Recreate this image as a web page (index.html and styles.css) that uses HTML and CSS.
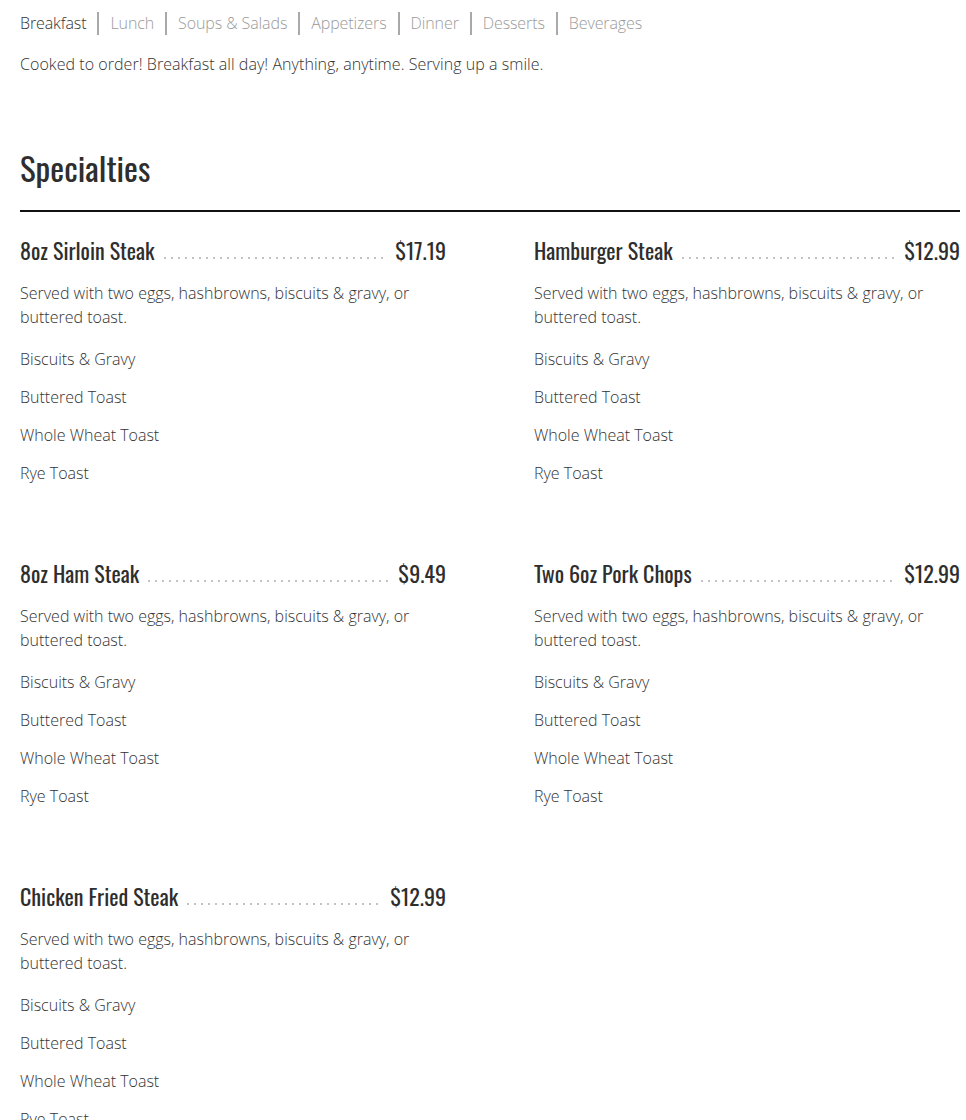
FILE: index.html
```html
<!DOCTYPE html>
<html>
<head>
<meta charset="utf-8">
<link rel="stylesheet" href="styles.css">
</head>
<body>
<div class="page">
  <nav class="tabs">
    <span class="tab active">Breakfast</span>
    <span class="tab">Lunch</span>
    <span class="tab">Soups &amp; Salads</span>
    <span class="tab">Appetizers</span>
    <span class="tab">Dinner</span>
    <span class="tab">Desserts</span>
    <span class="tab">Beverages</span>
  </nav>
  <p class="intro">Cooked to order! Breakfast all day! Anything, anytime. Serving up a smile.</p>
  <h1 class="section-title">Specialties</h1>
  <div class="grid">
    <div class="item">
      <div class="item-head"><span class="name">8oz Sirloin Steak</span><span class="leader"></span><span class="price">$17.19</span></div>
      <p class="desc">Served with two eggs, hashbrowns, biscuits &amp; gravy, or buttered toast.</p>
      <ul class="options"><li>Biscuits &amp; Gravy</li><li>Buttered Toast</li><li>Whole Wheat Toast</li><li>Rye Toast</li></ul>
    </div>
    <div class="item">
      <div class="item-head"><span class="name">Hamburger Steak</span><span class="leader"></span><span class="price">$12.99</span></div>
      <p class="desc">Served with two eggs, hashbrowns, biscuits &amp; gravy, or buttered toast.</p>
      <ul class="options"><li>Biscuits &amp; Gravy</li><li>Buttered Toast</li><li>Whole Wheat Toast</li><li>Rye Toast</li></ul>
    </div>
    <div class="item">
      <div class="item-head"><span class="name">8oz Ham Steak</span><span class="leader"></span><span class="price">$9.49</span></div>
      <p class="desc">Served with two eggs, hashbrowns, biscuits &amp; gravy, or buttered toast.</p>
      <ul class="options"><li>Biscuits &amp; Gravy</li><li>Buttered Toast</li><li>Whole Wheat Toast</li><li>Rye Toast</li></ul>
    </div>
    <div class="item">
      <div class="item-head"><span class="name">Two 6oz Pork Chops</span><span class="leader"></span><span class="price">$12.99</span></div>
      <p class="desc">Served with two eggs, hashbrowns, biscuits &amp; gravy, or buttered toast.</p>
      <ul class="options"><li>Biscuits &amp; Gravy</li><li>Buttered Toast</li><li>Whole Wheat Toast</li><li>Rye Toast</li></ul>
    </div>
    <div class="item">
      <div class="item-head"><span class="name">Chicken Fried Steak</span><span class="leader"></span><span class="price">$12.99</span></div>
      <p class="desc">Served with two eggs, hashbrowns, biscuits &amp; gravy, or buttered toast.</p>
      <ul class="options"><li>Biscuits &amp; Gravy</li><li>Buttered Toast</li><li>Whole Wheat Toast</li><li>Rye Toast</li></ul>
    </div>
  </div>
</div>
</body>
</html>
```

FILE: styles.css
```css
html, body {
  margin: 0;
  padding: 0;
  background: #fff;
}
body {
  font-family: "Open Sans", Lato, sans-serif;
  font-weight: 300;
  color: #333;
  font-size: 16px;
}
.page {
  padding: 11px 6px 0 20px;
}
.tabs {
  display: flex;
  align-items: center;
  height: 24px;
}
.tab {
  color: #9a9a9a;
  line-height: 23px;
  padding: 0 11px;
  letter-spacing: -0.1px;
  border-left: 2px solid #a9a9a9;
}
.tab:first-child {
  padding-left: 0;
  border-left: none;
}
.tab.active {
  color: #333;
}
.intro {
  margin: 17px 0 0;
  line-height: 24px;
  letter-spacing: 0.05px;
}
.section-title {
  margin: 67px 0 0;
  font-family: Oswald, "Roboto Condensed", sans-serif;
  font-weight: 400;
  font-size: 33px;
  line-height: 49px;
  color: #2e2e2e;
  padding-bottom: 18px;
  border-bottom: 2px solid #111;
}
.grid {
  display: grid;
  grid-template-columns: 426px 426px;
  column-gap: 88px;
  row-gap: 72px;
  padding-top: 22px;
}
.item-head {
  display: flex;
  align-items: baseline;
  height: 33px;
  line-height: 33px;
  font-family: Oswald, "Roboto Condensed", sans-serif;
  font-weight: 400;
  font-size: 22px;
  color: #2e2e2e;
}
.leader {
  flex: 1;
  align-self: flex-end;
  height: 2px;
  margin: 0 9px 8px 9px;
  background-image: linear-gradient(to right, #c2c2c2 2px, transparent 2px);
  background-size: 7px 2px;
  background-repeat: repeat-x;
}
.desc {
  margin: 14px 0 0;
  line-height: 24px;
}
.options {
  list-style: none;
  margin: 18px 0 0;
  padding: 0;
  display: flex;
  flex-direction: column;
  gap: 14px;
}
.options li {
  line-height: 24px;
}
```
